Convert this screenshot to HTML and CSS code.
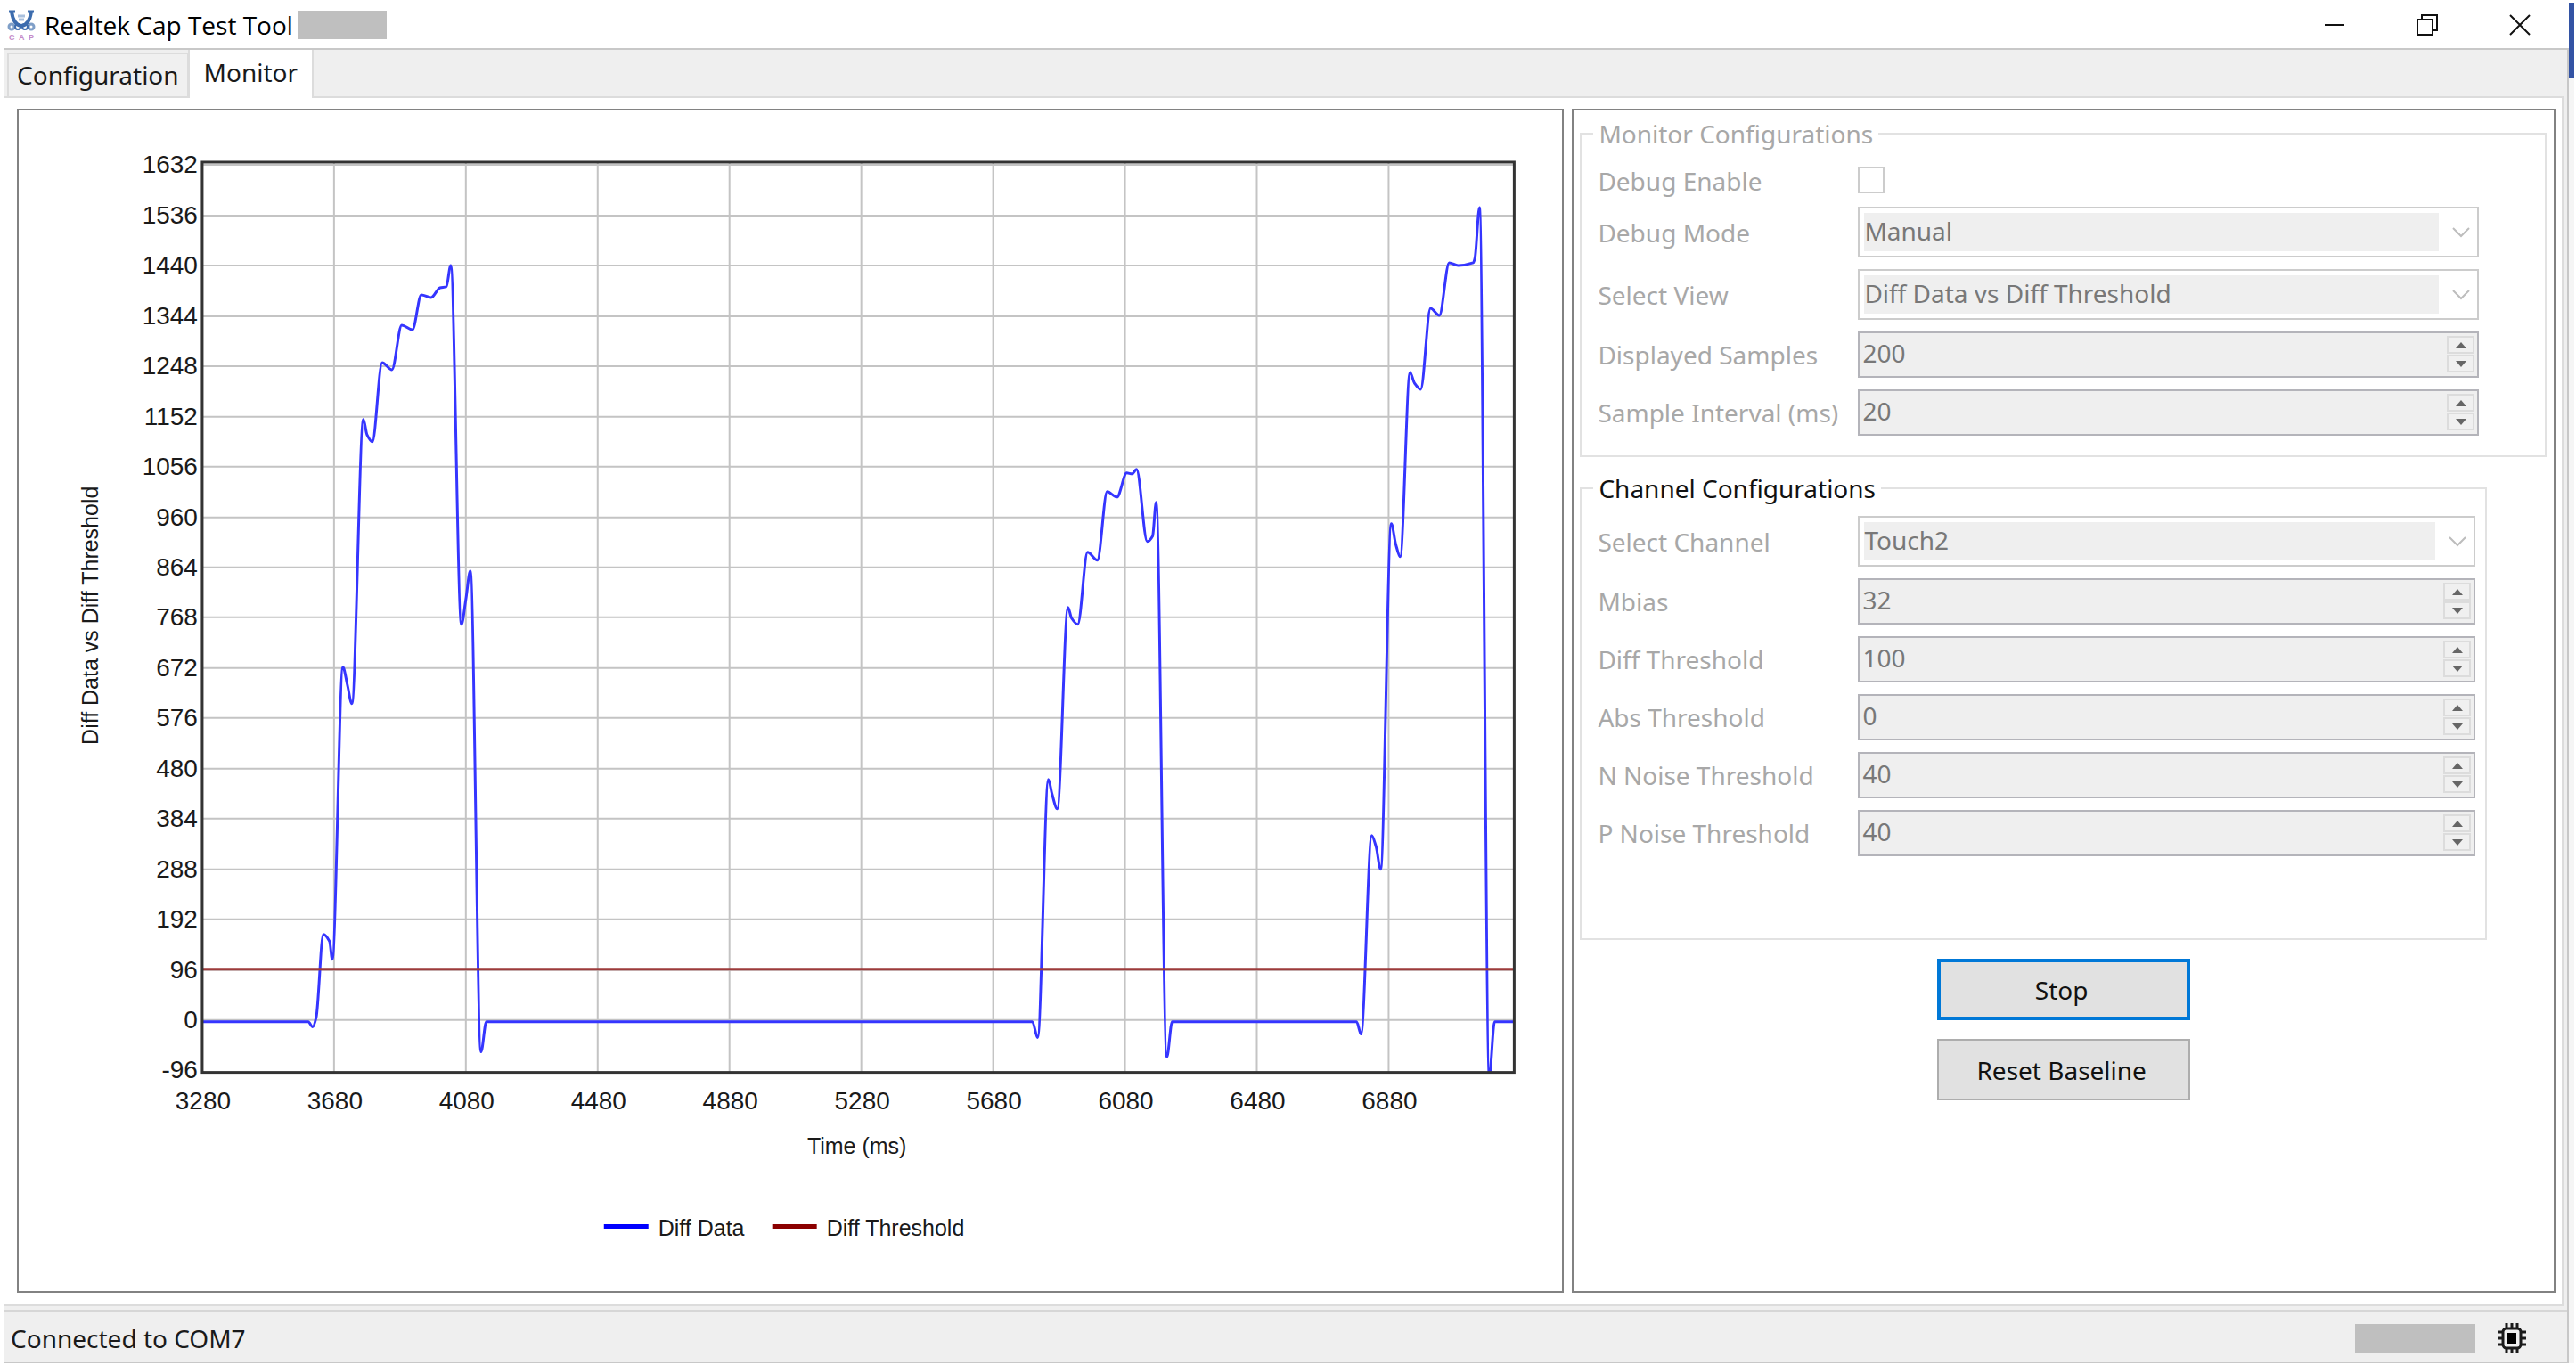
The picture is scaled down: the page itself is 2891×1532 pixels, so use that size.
FILE: index.html
```html
<!DOCTYPE html>
<html lang="en">
<head>
<meta charset="utf-8">
<title>Realtek Cap Test Tool</title>
<link rel="stylesheet" href="styles.css">
</head>
<body>
<div class="window">
  <header class="titlebar">
    <svg class="app-icon" viewBox="0 0 32 36" aria-hidden="true">
      <g fill="none" stroke="#3c6cae">
        <path d="M5 3Q7 18 16 19Q25 18 27 3" stroke-width="4"/>
        <path d="M2 3h7M23 3h7" stroke-width="3"/>
        <path d="M12 8h8M13 12h6" stroke="#a9c0dd" stroke-width="3"/>
        <circle cx="5" cy="20" r="3" stroke-width="3" stroke="#7f9fc8"/>
        <circle cx="27" cy="20" r="3" stroke-width="3" stroke="#7f9fc8"/>
        <circle cx="12" cy="20" r="3" stroke-width="2"/>
        <circle cx="20" cy="20" r="3" stroke-width="2"/>
      </g>
      <text class="app-icon-text" x="2" y="35">C</text>
      <text class="app-icon-text" x="13" y="35">A</text>
      <text class="app-icon-text" x="24" y="35">P</text>
    </svg>
    <h1 class="title">Realtek Cap Test Tool</h1>
    <span class="mask mask-title"></span>
    <div class="window-controls">
      <button class="win-btn" type="button" aria-label="Minimize"><svg viewBox="0 0 24 24"><path d="M1 12H23"/></svg></button>
      <button class="win-btn" type="button" aria-label="Restore"><svg viewBox="0 0 24 24"><path d="M1 6H18V23H1ZM6 6V1H23V18H18"/></svg></button>
      <button class="win-btn" type="button" aria-label="Close"><svg viewBox="0 0 24 24"><path d="M1 1L23 23M23 1L1 23"/></svg></button>
    </div>
  </header>

  <div class="client">
    <nav class="tabs" role="tablist">
      <button class="tab" type="button" role="tab" aria-selected="false">Configuration</button>
      <button class="tab tab-active" type="button" role="tab" aria-selected="true">Monitor</button>
    </nav>

    <main class="page">
      <section class="panel">
        <svg class="chart" viewBox="22 124 1733 1325" role="img" aria-label="Diff Data vs Diff Threshold over time">
          <defs><clipPath id="plot-area"><rect x="228" y="182" width="1473" height="1022"/></clipPath></defs>
          <path class="grid" id="grid"/>
          <g class="tick tick-y" id="ticks-y"></g>
          <g class="tick tick-x" id="ticks-x"></g>
          <g clip-path="url(#plot-area)">
            <path class="series series-data" id="diff-data"/>
            <path class="series series-threshold" d="M228 1088H1701"/>
          </g>
          <rect class="frame" x="228" y="182" width="1473" height="1022"/>
          <text class="axis-title" transform="translate(111 691) rotate(-90)">Diff Data vs Diff Threshold</text>
          <text class="axis-title" x="963" y="1295">Time (ms)</text>
          <path class="key key-data" d="M679 1377h50"/>
          <text class="legend-text" x="740" y="1387">Diff Data</text>
          <path class="key key-threshold" d="M868 1377h50"/>
          <text class="legend-text" x="929" y="1387">Diff Threshold</text>
        </svg>
      </section>

      <section class="panel side">
        <fieldset class="group group-monitor">
          <legend>Monitor Configurations</legend>
          <div class="fields">
            <label for="debug-enable">Debug Enable</label>
            <span class="check-row"><input class="check" id="debug-enable" type="checkbox" disabled></span>
            <label for="debug-mode">Debug Mode</label>
            <span class="combo"><select id="debug-mode" disabled><option>Manual</option></select><svg viewBox="0 0 20 12"><path d="M1 1L10 10L19 1"/></svg></span>
            <label for="view">Select View</label>
            <span class="combo"><select id="view" disabled><option>Diff Data vs Diff Threshold</option></select><svg viewBox="0 0 20 12"><path d="M1 1L10 10L19 1"/></svg></span>
            <label for="samples">Displayed Samples</label>
            <span class="spin"><input id="samples" type="number" value="200" disabled><span class="arrows"><button type="button" disabled aria-label="Increase" class="up"></button><button type="button" disabled aria-label="Decrease" class="down"></button></span></span>
            <label for="interval">Sample Interval (ms)</label>
            <span class="spin"><input id="interval" type="number" value="20" disabled><span class="arrows"><button type="button" disabled aria-label="Increase" class="up"></button><button type="button" disabled aria-label="Decrease" class="down"></button></span></span>
          </div>
        </fieldset>

        <fieldset class="group group-channel">
          <legend>Channel Configurations</legend>
          <div class="fields">
            <label for="channel">Select Channel</label>
            <span class="combo"><select id="channel" disabled><option>Touch2</option></select><svg viewBox="0 0 20 12"><path d="M1 1L10 10L19 1"/></svg></span>
            <label for="mbias">Mbias</label>
            <span class="spin"><input id="mbias" type="number" value="32" disabled><span class="arrows"><button type="button" disabled aria-label="Increase" class="up"></button><button type="button" disabled aria-label="Decrease" class="down"></button></span></span>
            <label for="diff">Diff Threshold</label>
            <span class="spin"><input id="diff" type="number" value="100" disabled><span class="arrows"><button type="button" disabled aria-label="Increase" class="up"></button><button type="button" disabled aria-label="Decrease" class="down"></button></span></span>
            <label for="abs">Abs Threshold</label>
            <span class="spin"><input id="abs" type="number" value="0" disabled><span class="arrows"><button type="button" disabled aria-label="Increase" class="up"></button><button type="button" disabled aria-label="Decrease" class="down"></button></span></span>
            <label for="n-noise">N Noise Threshold</label>
            <span class="spin"><input id="n-noise" type="number" value="40" disabled><span class="arrows"><button type="button" disabled aria-label="Increase" class="up"></button><button type="button" disabled aria-label="Decrease" class="down"></button></span></span>
            <label for="p-noise">P Noise Threshold</label>
            <span class="spin"><input id="p-noise" type="number" value="40" disabled><span class="arrows"><button type="button" disabled aria-label="Increase" class="up"></button><button type="button" disabled aria-label="Decrease" class="down"></button></span></span>
          </div>
        </fieldset>

        <div class="actions">
          <button class="action action-default" type="button">Stop</button>
          <button class="action" type="button">Reset Baseline</button>
        </div>
      </section>
    </main>

    <footer class="status">
      <span>Connected to COM7</span>
      <span class="mask mask-status"></span>
      <svg class="chip" viewBox="0 0 32 36" aria-hidden="true">
        <path d="M10 1V6M16 1V6M22 1V6M10 30V35M16 30V35M22 30V35M0 11H5M0 18H5M0 25H5M27 11H32M27 18H32M27 25H32" stroke="#1a1a1a" stroke-width="3"/>
        <rect x="6" y="7" width="20" height="22" rx="4" fill="#efefef" stroke="#1a1a1a" stroke-width="3"/>
        <rect x="11" y="12" width="10" height="12" fill="#000"/>
      </svg>
    </footer>
  </div>
</div>
<div class="desktop-edge"></div>
<script src="chart.js"></script>
</body>
</html>
```

FILE: chart.js
```js
const NS = 'http://www.w3.org/2000/svg';
const LEFT = 228, RIGHT = 1701, TOP = 182, BOTTOM = 1204, ZERO = 1145;

function addTick(parent, x, y, text) {
  const node = document.createElementNS(NS, 'text');
  node.setAttribute('x', x);
  node.setAttribute('y', y);
  node.textContent = text;
  document.getElementById(parent).appendChild(node);
}

let grid = '';
for (let k = -1; k <= 17; k++) {
  const y = Math.round(ZERO - k * 56.45);
  if (k >= 0) grid += `M${LEFT} ${y}H${RIGHT}`;
  addTick('ticks-y', 223, y + 9, k * 96);
}
for (let k = 0; k < 10; k++) {
  const x = LEFT + k * 148;
  if (k > 0) grid += `M${x} ${TOP}V${BOTTOM}`;
  addTick('ticks-x', x + 1, 1245, 3280 + k * 400);
}
document.getElementById('grid').setAttribute('d', grid);

const points = [
  [228,1147],[347,1147],[352,1153],[356,1142],[364,1049],[371,1057],[374,1077],
  [386,749],[391,769],[396,790],[409,471],[413,488],[419,496],[430,407],[441,415],
  [452,365],[464,370],[474,331],[485,334],[495,323],[502,322],[507,298],
  [519,701],[524,673],[529,641],[541,1181],[547,1147],
  [1160,1147],[1166,1165],[1178,875],[1182,891],[1188,908],[1200,682],[1204,694],
  [1211,701],[1222,620],[1233,629],[1244,552],[1255,558],[1266,531],[1272,532],
  [1277,527],[1289,608],[1295,602],[1299,564],[1311,1187],[1317,1147],
  [1524,1147],[1529,1161],[1541,938],[1546,951],[1551,976],[1563,588],[1568,611],
  [1573,625],[1584,418],[1589,430],[1596,437],[1607,346],[1617,354],[1628,295],
  [1638,298],[1655,295],[1657,289],[1662,233],[1673,1208],[1679,1147],[1701,1147]
];

// Monotone cubic interpolation, so peaks stay at the sampled values.
const slope = points.slice(1).map((p, i) => (p[1] - points[i][1]) / (p[0] - points[i][0]));
const tangent = points.map((p, i) => {
  const a = slope[i - 1], b = slope[i];
  if (a === undefined || b === undefined || a * b <= 0) return 0;
  return 2 * a * b / (a + b);
});
let d = `M${points[0]}`;
for (let i = 1; i < points.length; i++) {
  const [x0, y0] = points[i - 1], [x1, y1] = points[i], h = (x1 - x0) / 3;
  d += `C${x0 + h} ${y0 + h * tangent[i - 1]} ${x1 - h} ${y1 - h * tangent[i]} ${x1} ${y1}`;
}
document.getElementById('diff-data').setAttribute('d', d);
```

FILE: styles.css
```css
* { box-sizing: border-box; }

body {
  margin: 0;
  display: flex;
  min-height: 100vh;
  background: #fff;
  color: #1a1a1a;
  font: 28px/36px "Noto Sans", "Open Sans", sans-serif;
}

button, input, select { font: inherit; color: inherit; }

.window { flex: 1; display: flex; flex-direction: column; padding: 0 0 4px 4px; }

.desktop-edge {
  flex: none;
  width: 6px;
  margin: 3px 2px 4px 0;
  background: linear-gradient(#3353a4 84px, #f5f5f5 84px);
}

.titlebar { display: flex; align-items: center; height: 54px; padding: 2px 32px 0 4px; }
.app-icon { width: 32px; height: 36px; margin-right: 10px; }
.app-icon-text { font: bold 9px "Liberation Sans", sans-serif; fill: #c58ac9; }
.title { margin: 0; color: #000; font-size: 28px; font-weight: 400; font-family: "Open Sans", sans-serif; }
.mask { background: #bfbfbf; height: 32px; }
.mask-title { width: 100px; margin-left: 5px; }
.window-controls { display: flex; gap: 58px; margin-left: auto; }
.win-btn { width: 46px; height: 46px; padding: 11px; border: 0; background: none; }
.win-btn svg { display: block; width: 24px; height: 24px; fill: none; stroke: #111; stroke-width: 2; }

.client {
  flex: 1;
  display: flex;
  flex-direction: column;
  border: 2px solid #c8c8c8;
  border-width: 2px 2px 1px 1px;
  background: #efefef;
}

.tabs { display: flex; align-items: flex-end; height: 52px; padding-left: 3px; }
.tab { height: 49px; padding: 0 9px 1px; border: 2px solid #dcdcdc; border-bottom: 0; background: #f0f0f0; }
.tab-active { height: 54px; margin: 0 0 -2px -1px; padding: 0 16px 4px; border-top: 0; background: #fff; position: relative; }

.page {
  flex: 1;
  display: grid;
  grid-template-columns: 1737fr 1104fr;
  gap: 9px;
  padding: 12px 7px 13px 14px;
  margin-right: 4px;
  border: 2px solid #dcdcdc;
  border-left: 0;
  background: #fff;
}
.panel { border: 2px solid #828282; min-width: 0; }

.chart { display: block; width: 100%; height: auto; font-family: "Liberation Sans", Arial, sans-serif; fill: #1a1a1a; }
.grid { fill: none; stroke: #c4c4c4; stroke-width: 2; }
.frame { fill: none; stroke: #333; stroke-width: 3; }
.tick { font-size: 28px; }
.tick-y { text-anchor: end; }
.tick-x { text-anchor: middle; }
.axis-title { font-size: 25px; text-anchor: middle; }
.legend-text { font-size: 25px; }
.series { fill: none; stroke-width: 3; stroke-linejoin: round; }
.series-data { stroke: #3535ff; }
.series-threshold { stroke: #9c3a3a; }
.key { stroke-width: 5; }
.key-data { stroke: #00f; }
.key-threshold { stroke: #8b0000; }

.side { padding: 8px 8px 0 7px; }
.group { min-width: 0; margin: 0; padding: 0 0 0 18px; border: 2px solid #e2e2e2; }
.group legend { margin-left: -5px; padding: 0 6px; }
.group-monitor { padding-top: 19px; padding-right: 74px; padding-bottom: 22px; color: #a8a8a8; }
.group-channel { margin: 17px 67px 0 0; padding-top: 13px; padding-right: 11px; padding-bottom: 92px; }
.group-channel legend { color: #111; }

.fields { display: grid; grid-template-columns: 292px minmax(0, 1fr); row-gap: 13px; align-items: center; color: #a8a8a8; line-height: 32px; }

.check-row { display: flex; height: 32px; }
.check { appearance: none; width: 30px; height: 30px; margin: 0; border: 2px solid #ccc; background: #fff; }

.combo { display: flex; align-items: center; height: 57px; padding: 5px 8px 5px 5px; border: 2px solid #ccc; background: #fff; }
.combo select {
  appearance: none;
  flex: 1;
  min-width: 0;
  height: 43px;
  margin-right: 15px;
  padding: 0 0 4px;
  border: 0;
  border-radius: 0;
  background: #efefef;
  color: #787878;
  opacity: 1;
}
.combo svg { width: 20px; height: 12px; fill: none; stroke: #bdbdbd; stroke-width: 2; }

.spin { display: flex; height: 52px; border: 2px solid #b4b4ba; background: #efefef; }
.spin input {
  appearance: textfield;
  flex: 1;
  min-width: 0;
  padding: 0 0 4px 3px;
  border: 0;
  background: none;
  color: #787878;
}
.spin input::-webkit-inner-spin-button { appearance: none; }
.arrows { display: grid; gap: 1px; padding: 3px 3px 5px; }
.arrows button { display: grid; place-items: center; width: 31px; height: 20px; padding: 0; border: 2px solid #dcdcdc; background: #f0f0f0; }
.arrows button::before { content: ""; border: 0 solid transparent; border-width: 0 6px; }
.arrows .up::before { border-bottom: 7px solid #666; }
.arrows .down::before { border-top: 7px solid #666; }

.actions { display: grid; justify-content: center; gap: 21px; padding-top: 21px; }
.action { width: 284px; height: 69px; padding: 0 4px 0 0; border: 2px solid #adadad; background: #e1e1e1; color: #111; }
.action-default { border: 4px solid #0078d7; }

.status {
  display: flex;
  align-items: center;
  height: 59px;
  margin-top: 4px;
  padding: 3px 46px 0 7px;
  border-top: 2px solid #d6d6d6;
}
.mask-status { width: 135px; margin-left: auto; }
.chip { width: 32px; height: 36px; margin-left: 25px; }
```
